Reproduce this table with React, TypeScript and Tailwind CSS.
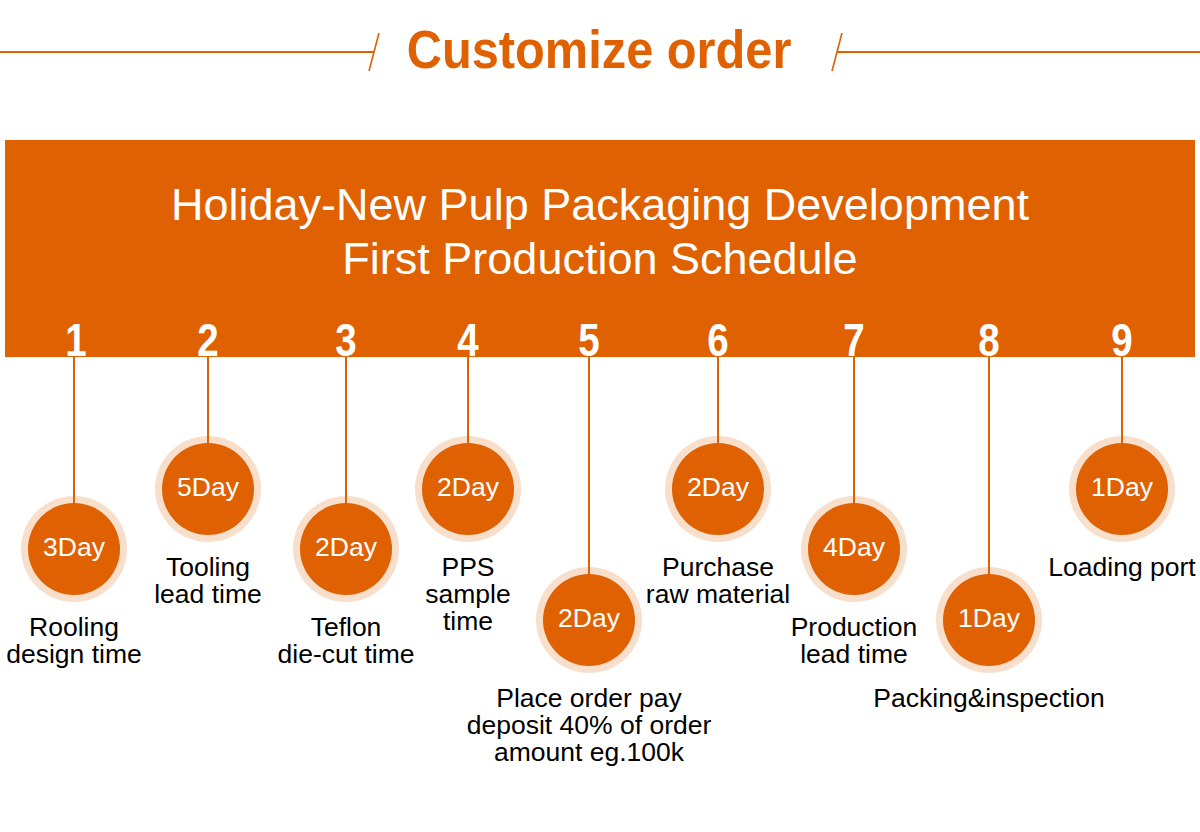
const steps = [
  { n: '1', day: '3Day', drop: 139, label: ['Rooling', 'design time'] },
  { n: '2', day: '5Day', drop: 79, label: ['Tooling', 'lead time'] },
  { n: '3', day: '2Day', drop: 139, label: ['Teflon', 'die-cut time'] },
  { n: '4', day: '2Day', drop: 79, label: ['PPS', 'sample', 'time'] },
  { n: '5', day: '2Day', drop: 210, label: ['Place order pay', 'deposit 40% of order', 'amount eg.100k'] },
  { n: '6', day: '2Day', drop: 79, label: ['Purchase', 'raw material'] },
  { n: '7', day: '4Day', drop: 139, label: ['Production', 'lead time'] },
  { n: '8', day: '1Day', drop: 210, label: ['Packing&inspection'] },
  { n: '9', day: '1Day', drop: 79, label: ['Loading port'] },
];

function Slash() {
  return (
    <svg width="12" height="40" viewBox="0 0 12 40" className="shrink-0">
      <line x1="11" y1="1" x2="1" y2="39" stroke="#e06101" strokeWidth="1.6" />
    </svg>
  );
}

function Header() {
  return (
    <div className="flex items-start h-[140px]">
      <div className="w-[374px] h-[2px] bg-[#e06101] mt-[51px] shrink-0" />
      <div className="-ml-[6px] mt-[32px]">
        <Slash />
      </div>
      <div className="w-[438px] shrink-0 flex justify-center mt-[23px]">
        <span className="text-[53px] leading-none font-bold text-[#e06101] scale-x-[0.92] whitespace-nowrap">
          Customize order
        </span>
      </div>
      <div className="ml-[13px] mt-[32px]">
        <Slash />
      </div>
      <div className="flex-1 h-[2px] bg-[#e06101] mt-[51px] -ml-[6px]" />
    </div>
  );
}

function Banner() {
  return (
    <div className="mx-[5px] bg-[#e06101] pt-[38px] text-white">
      <div className="text-center text-[45px] leading-[54px]">
        <div>Holiday-New Pulp Packaging Development</div>
        <div>First Production Schedule</div>
      </div>
      <div className="mt-[37px] grid grid-cols-[143px_120px_156px_88px_154px_104px_168px_102px_164px]">
        {steps.map((s) => (
          <div key={s.n} className="flex justify-center">
            <span className="text-[47px] leading-[34px] font-bold scale-x-[0.82]">{s.n}</span>
          </div>
        ))}
      </div>
    </div>
  );
}

function Step({ day, drop, label }: { day: string; drop: number; label: string[] }) {
  return (
    <div className="flex flex-col items-center">
      <div className="w-[2px] bg-[#e06101] relative z-10" style={{ height: drop + 7 }} />
      <div className="-mt-[7px] w-[106px] h-[106px] rounded-full bg-[#f8dfcc] flex items-center justify-center shrink-0">
        <div className="w-[92px] h-[92px] rounded-full bg-[#e06101] flex items-center justify-center pb-[3px]">
          <span className="text-white text-[26.5px] leading-none">{day}</span>
        </div>
      </div>
      <div className="mt-[12px] text-center text-black text-[26.5px] leading-[27px] whitespace-nowrap">
        {label.map((l) => (
          <div key={l}>{l}</div>
        ))}
      </div>
    </div>
  );
}

export default function App() {
  return (
    <div className="w-[1200px] h-[832px] bg-white overflow-hidden font-['Liberation_Sans',Arial,sans-serif]">
      <Header />
      <Banner />
      <div className="grid grid-cols-[148px_120px_156px_88px_154px_104px_168px_102px_164px]">
        {steps.map((s) => (
          <Step key={s.n} day={s.day} drop={s.drop} label={s.label} />
        ))}
      </div>
    </div>
  );
}
